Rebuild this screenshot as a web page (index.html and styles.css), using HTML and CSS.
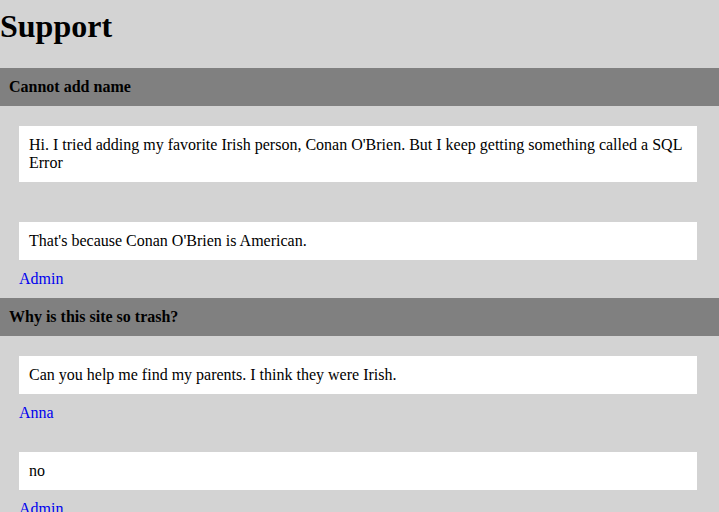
FILE: index.html
```html
<!DOCTYPE html>
<html>
<head>
<meta charset="utf-8">
<title>Support</title>
<link rel="stylesheet" href="styles.css">
</head>
<body>
<h1 class="page-title">Support</h1>
<section class="thread">
  <h3 class="thread-title">Cannot add name</h3>
  <div class="reply">
    <p class="reply-body">Hi. I tried adding my favorite Irish person, Conan O'Brien. But I keep getting something called a SQL Error</p>
    <a class="reply-author" href="#"></a>
  </div>
  <div class="reply">
    <p class="reply-body">That's because Conan O'Brien is American.</p>
    <a class="reply-author" href="#">Admin</a>
  </div>
</section>
<section class="thread">
  <h3 class="thread-title">Why is this site so trash?</h3>
  <div class="reply">
    <p class="reply-body">Can you help me find my parents. I think they were Irish.</p>
    <a class="reply-author" href="#">Anna</a>
  </div>
  <div class="reply">
    <p class="reply-body">no</p>
    <a class="reply-author" href="#">Admin</a>
  </div>
</section>
</body>
</html>
```
FILE: styles.css
```css
html, body {
  margin: 0;
  padding: 0;
}
body {
  background: #d3d3d3;
  font-family: "Liberation Serif", "Times New Roman", serif;
  font-size: 16px;
  color: #000;
}
.page-title {
  font-size: 32px;
  font-weight: bold;
  margin: 8px 0 23px;
}
.thread {
  display: block;
}
.thread-title {
  margin: 0;
  background: #808080;
  font-size: 16px;
  font-weight: bold;
  padding: 10px 10px 10px 9px;
}
.reply {
  padding: 20px 22px 10px 19px;
}
.reply-body {
  margin: 0 0 10px;
  background: #fff;
  padding: 10px;
}
.reply-author {
  display: block;
  color: #0000ee;
  text-decoration: none;
}
```
